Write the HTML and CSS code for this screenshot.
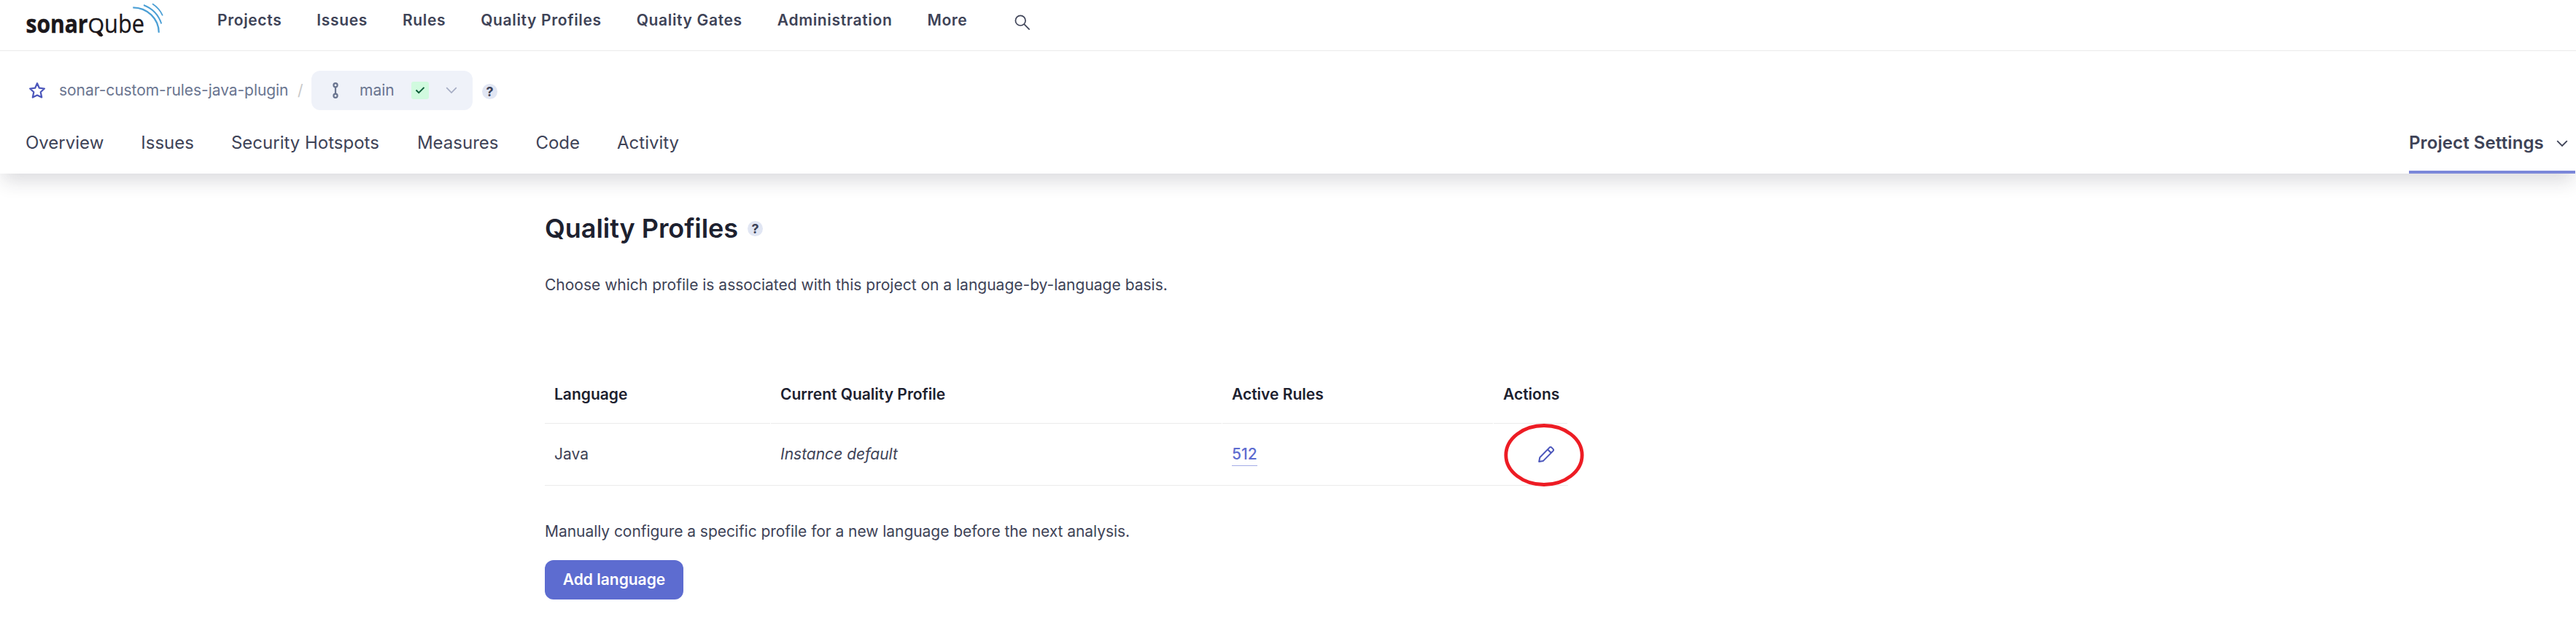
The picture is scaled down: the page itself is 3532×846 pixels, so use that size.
FILE: index.html
```html
<!DOCTYPE html>
<html lang="en">
<head>
<meta charset="utf-8">
<title>Quality Profiles</title>
<link rel="stylesheet" href="styles.css">
</head>
<body>
<header class="topbar">
  <svg class="logo" width="192" height="56" viewBox="34 0 192 56" role="img" aria-label="sonarqube">
    <text y="44.500"><tspan class="logo-bold" x="35.500" textLength="85" lengthAdjust="spacingAndGlyphs">sonar</tspan><tspan class="logo-q" x="120.500" textLength="22.500" lengthAdjust="spacingAndGlyphs">Q</tspan><tspan class="logo-light" x="143" textLength="55" lengthAdjust="spacingAndGlyphs">ube</tspan></text>
    <path d="M135 42L140 49.500" stroke="#1b171b" stroke-width="3.600"/>
    <g fill="none" stroke="#4b9fd5">
      <path d="M182.300 10.300A35.500 34.500 0 0 1 217.800 44.800" stroke-width="2.200"/>
      <path d="M197 7A41 41 0 0 1 221.300 32.500" stroke-width="1.900"/>
      <path d="M209 5.300A38 38 0 0 1 223 21.300" stroke-width="1.700"/>
    </g>
  </svg>
  <nav class="main-nav">
    <a>Projects</a><a>Issues</a><a>Rules</a><a>Quality Profiles</a><a>Quality Gates</a><a>Administration</a><a>More</a>
  </nav>
  <svg class="search" width="22" height="22" viewBox="0 0 22 22" fill="none" stroke="#3e4357" stroke-width="1.700"><circle cx="8.200" cy="8.200" r="6.800"/><path d="M13.200 13.200L20.600 20.600"/></svg>
</header>
<section class="project-header">
  <div class="crumbs">
    <svg class="star" width="24" height="24" viewBox="0 0 24 24" fill="none" stroke="#4b56bb" stroke-width="2.200" stroke-linejoin="round"><path d="M12 2.200L14.900 8.700L21.900 9.500L16.700 14.200L18.200 21.500L12 18.500L5.800 21.500L7.300 14.200L2.100 9.500L9.100 8.700Z"/></svg>
    <a class="crumb">sonar-custom-rules-java-plugin</a>
    <span class="slash">/</span>
    <div class="branch">
      <svg class="branch-icon" width="10" height="22" viewBox="0 0 10 22" fill="none" stroke="#6a7590" stroke-width="2.200"><circle cx="5" cy="3.700" r="2.600"/><circle cx="5" cy="18.300" r="2.600"/><path d="M5 6.300V15.700"/></svg>
      <span class="branch-name">main</span>
      <span class="check"><svg width="14" height="12" viewBox="0 0 14 12" fill="none" stroke="#0a5c38" stroke-width="2"><path d="M1.500 5.500L5.200 9.200L12.500 1.900"/></svg></span>
      <svg class="chev" width="16" height="10" viewBox="0 0 16 10" fill="none" stroke="#a6adc4" stroke-width="1.700"><path d="M1.200 1.200L8 8L14.800 1.200"/></svg>
    </div>
    <span class="help">?</span>
  </div>
  <nav class="tabs">
    <a>Overview</a><a>Issues</a><a>Security Hotspots</a><a class="tab-measures">Measures</a><a>Code</a><a>Activity</a>
    <div class="settings"><span>Project Settings</span><svg width="16" height="10" viewBox="0 0 16 10" fill="none" stroke="#3e4357" stroke-width="1.800"><path d="M1.200 1.200L8 8L14.800 1.200"/></svg></div>
  </nav>
</section>
<main class="content">
  <div class="title-row"><h1>Quality Profiles</h1><span class="help">?</span></div>
  <p class="intro">Choose which profile is associated with this project on a language-by-language basis.</p>
  <div class="table">
    <div class="th">Language</div><div class="th">Current Quality Profile</div><div class="th">Active Rules</div><div class="th">Actions</div>
    <div class="td">Java</div><div class="td"><em>Instance default</em></div><div class="td"><a class="count">512</a></div>
    <div class="td action">
      <svg class="pencil" width="24" height="24" viewBox="0 0 24 24" fill="none" stroke="#4b56bb" stroke-width="2" stroke-linejoin="round"><path d="M2.200 22L3.300 16.200L16.600 2.600Q18 1.300 19.400 2.600L21.400 4.600Q22.700 6 21.400 7.400L8 20.900ZM14 5.200L18.800 10"/></svg>
      <svg class="ring" width="110" height="86" viewBox="0 0 110 86" fill="none" stroke="#ed1c24" stroke-width="4.800"><ellipse cx="55" cy="43" rx="52.200" ry="40.500"/></svg>
    </div>
  </div>
  <p class="manual">Manually configure a specific profile for a new language before the next analysis.</p>
  <button class="add">Add language</button>
</main>
</body>
</html>
```
FILE: styles.css
```css
* { box-sizing: border-box; }
body { margin: 0; width: 3532px; height: 846px; overflow: hidden; background: #fff; color: #3e4357; font: 400 21px/30px Inter, sans-serif; }
.topbar { position: relative; z-index: 1; display: flex; height: 70px; padding-left: 34px; border-bottom: 1px solid #ebebeb; background: #fff; }
.logo { flex: none; }
.logo-bold { font: 700 34px "Open Sans", sans-serif; fill: #1b171b; stroke: #1b171b; stroke-width: 0.5; }
.logo-q { font: 400 26.5px "Open Sans", sans-serif; fill: #1b171b; stroke: #1b171b; stroke-width: 0.4; }
.logo-light { font: 400 34px "Open Sans", sans-serif; fill: #1b171b; stroke: #1b171b; stroke-width: 0.3; }
.main-nav { display: flex; gap: 48px; margin-left: 72px; padding-top: 13px; font-weight: 600; letter-spacing: 0.65px; white-space: nowrap; }
.search { margin: 20px 0 0 65px; }
.project-header { height: 168px; padding-top: 27px; background: #fff; box-shadow: 0 14px 24px -4px rgba(29, 33, 47, 0.16); }
.crumbs { display: flex; align-items: center; height: 54px; padding-left: 39px; color: #6a7590; white-space: nowrap; }
.star { margin-right: 18px; }
.crumb { width: 315px; letter-spacing: -0.06px; }
.slash { width: 31px; padding-left: 12px; color: #c8c8c8; }
.branch { display: flex; align-items: center; width: 221px; height: 54px; padding-left: 28px; border-radius: 12px; background: #eff2f9; }
.branch-name { width: 71px; margin-left: 28px; }
.check { display: flex; align-items: center; justify-content: center; width: 24px; height: 24px; border-radius: 3px; background: #d1fadf; }
.chev { margin-left: 23px; }
.help { display: flex; align-items: center; justify-content: center; width: 21px; height: 21px; border-radius: 50%; background: #e1e6f3; color: #3e4357; font-size: 18px; font-weight: 700; line-height: 21px; }
.crumbs .help { margin: 2px 0 0 13px; }
.tabs { display: flex; gap: 51px; height: 87px; padding: 30px 1px 0 35px; font-size: 24px; white-space: nowrap; }
.tab-measures { padding-left: 1px; }
.settings { display: flex; width: 228px; height: 57px; margin-left: auto; border-bottom: 4px solid #7b87d9; font-weight: 600; letter-spacing: 0.1px; }
.settings svg { margin: 11px 0 0 17px; }
.content { width: 1404px; padding-top: 51px; margin-left: 747px; }
.title-row { display: flex; align-items: center; height: 48px; }
h1 { margin: 0; color: #1d212f; font-size: 36px; font-weight: 600; line-height: 48px; letter-spacing: -0.05px; }
.title-row .help { margin-left: 13px; }
p { margin: 0; }
.intro { padding-top: 39px; }
.table { display: grid; grid-template-columns: 310px 619px 372px 102px; margin-top: 99px; }
.th { height: 76px; margin-right: 1px; padding: 21px 0 0 13px; border-bottom: 1px solid #ebebeb; color: #1d212f; font-weight: 600; white-space: nowrap; }
.td { height: 85px; padding: 27px 0 0 13px; border-bottom: 1px solid #ebebeb; }
.count { display: inline-block; border-bottom: 1px solid #a3abe6; color: #5d6cd0; font-weight: 500; }
.action { position: relative; }
.pencil { position: absolute; left: 60px; top: 30px; }
.ring { position: absolute; left: 14px; top: 0; }
.manual { padding-top: 48px; letter-spacing: -0.05px; }
.add { display: block; width: 190px; height: 54px; margin-top: 24px; padding: 0; border: 0; border-radius: 12px; background: #5d6cd0; color: #fff; font: 600 21px/54px Inter, sans-serif; }
```
